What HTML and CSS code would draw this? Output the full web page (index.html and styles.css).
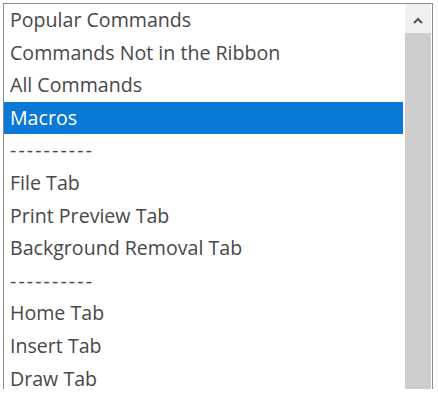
FILE: index.html
```html
<!DOCTYPE html>
<html lang="en">
<head>
  <meta charset="UTF-8" />
  <meta name="viewport" content="width=device-width, initial-scale=1.0" />
  <title>Choose commands from</title>
  <link rel="stylesheet" href="styles.css">
</head>
<body>
  <div class="listbox">
    <ul class="items">
      <li>Popular Commands</li>
      <li>Commands Not in the Ribbon</li>
      <li>All Commands</li>
      <li class="selected">Macros</li>
      <li class="separator">----------</li>
      <li>File Tab</li>
      <li>Print Preview Tab</li>
      <li>Background Removal Tab</li>
      <li class="separator">----------</li>
      <li>Home Tab</li>
      <li>Insert Tab</li>
      <li>Draw Tab</li>
    </ul>
    <div class="scrollbar">
      <div class="scroll-up">
        <svg width="10" height="7" viewBox="0 0 10 7"><polyline points="1,6 5,2 9,6" fill="none" stroke="#555" stroke-width="2.2"/></svg>
      </div>
      <div class="thumb"></div>
    </div>
  </div>
</body>
</html>
```

FILE: styles.css
```css
body {
  margin: 0;
  background: #fff;
  font-family: 'Open Sans', 'Noto Sans', sans-serif;
}
.listbox {
  margin: 3px 0 0 3px;
  width: 428px;
  height: 385px;
  border: 1px solid #8c8c8c;
  border-bottom: none;
  display: flex;
  overflow: hidden;
}
.items {
  list-style: none;
  margin: 0;
  padding: 0;
  width: 399px;
}
.items li {
  height: 32.6px;
  line-height: 32.6px;
  padding-left: 6px;
  font-size: 19.6px;
  color: #484848;
  white-space: nowrap;
}
.items li.separator {
  letter-spacing: 2.1px;
}
.items li.selected {
  background: #0a78d7;
  color: #fff;
}
.scrollbar {
  margin-left: 2px;
  width: 26px;
  display: flex;
  flex-direction: column;
}
.scroll-up {
  height: 29px;
  background: #f0f0f0;
  display: flex;
  justify-content: center;
  align-items: center;
  padding-top: 3px;
  box-sizing: border-box;
}
.thumb {
  flex: 1;
  background: #cdcdcd;
}
```
